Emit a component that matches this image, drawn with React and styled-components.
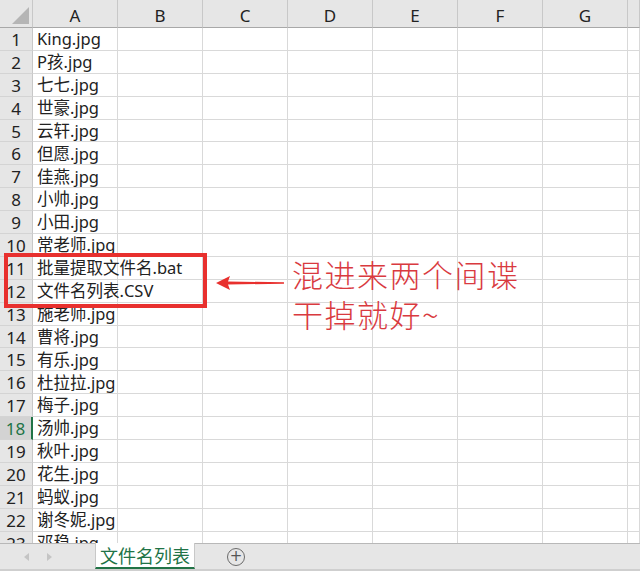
import React from "react";
import styled, { createGlobalStyle } from "styled-components";

const Global = createGlobalStyle`
  html, body { margin: 0; padding: 0; background: #fff; }
  body { width: 640px; height: 571px; overflow: hidden; font-family: "Noto Sans", "Noto Sans CJK SC", sans-serif; }
`;

const Page = styled.div`
  position: relative;
  width: 640px;
  height: 571px;
  display: flex;
  flex-direction: column;
  overflow: hidden;
`;

const Sheet = styled.div`
  height: 543px;
  overflow: hidden;
  display: grid;
  grid-template-columns: 33px repeat(7, 85px) 1fr;
  grid-auto-rows: 22.9px;
  grid-template-rows: 28px;
  align-content: start;
`;

const Corner = styled.div`
  background: #e6e6e6;
  border-right: 1px solid #c8c8c8;
  border-bottom: 1px solid #a8a8a8;
  position: relative;
  box-sizing: border-box;
  &::after {
    content: "";
    position: absolute;
    right: 3px;
    bottom: 3px;
    width: 0;
    height: 0;
    border-left: 17px solid transparent;
    border-bottom: 17px solid #b5b5b5;
  }
`;

const ColHead = styled.div`
  background: #e6e6e6;
  border-right: 1px solid #c8c8c8;
  border-bottom: 1px solid #a8a8a8;
  box-sizing: border-box;
  display: flex;
  align-items: center;
  justify-content: center;
  font-size: 17px;
  color: #222;
  padding-top: 3px;
`;

const RowHead = styled.div`
  background: ${(p) => (p.$active ? "#d3d3d3" : "#e6e6e6")};
  color: ${(p) => (p.$active ? "#217346" : "#222")};
  border-right: ${(p) => (p.$active ? "2px solid #217346" : "1px solid #c8c8c8")};
  border-bottom: 1px solid #d4d4d4;
  box-sizing: border-box;
  display: flex;
  align-items: center;
  justify-content: center;
  padding-top: 1px;
  font-size: 17px;
  line-height: 1;
`;

const Cell = styled.div`
  border-right: 1px solid #d9d9d9;
  border-bottom: 1px solid #d9d9d9;
  box-sizing: border-box;
  display: flex;
  align-items: center;
  padding-left: 4px;
  padding-top: 1px;
  font-size: 16.5px;
  color: #222;
  white-space: nowrap;
  overflow: visible;
  font-family: "Noto Sans", "Noto Sans CJK SC", sans-serif;
  line-height: 1;
  position: relative;
  z-index: ${(p) => (p.$text ? 1 : 0)};
  background: ${(p) => (p.$text ? "transparent" : "#fff")};
`;

const TabBar = styled.div`
  height: 28px;
  background: #e6e6e6;
  border-top: 1px solid #b8b8b8;
  border-bottom: 2px solid #cfcfcf;
  box-sizing: border-box;
  display: flex;
  align-items: stretch;
`;

const NavArrows = styled.div`
  width: 95px;
  display: flex;
  align-items: center;
  gap: 18px;
  padding-left: 24px;
  box-sizing: border-box;
`;

const Tri = styled.span`
  width: 0;
  height: 0;
  border-top: 4px solid transparent;
  border-bottom: 4px solid transparent;
  ${(p) => (p.$left ? "border-right: 5px solid #c4c4c4;" : "border-left: 5px solid #c4c4c4;")}
`;

const Tab = styled.div`
  width: 100px;
  margin-top: -1px;
  background: #fff;
  border-left: 1px solid #c8c8c8;
  border-right: 1px solid #c8c8c8;
  border-bottom: 2px solid #217346;
  box-sizing: border-box;
  display: flex;
  align-items: center;
  justify-content: center;
  font-size: 18px;
  color: #217346;
  font-family: "Noto Sans CJK SC", sans-serif;
`;

const AddBtn = styled.div`
  margin-left: 32px;
  align-self: center;
  width: 18px;
  height: 18px;
  border: 1.5px solid #6a6a6a;
  border-radius: 50%;
  box-sizing: border-box;
  display: flex;
  align-items: center;
  justify-content: center;
  color: #555;
  font-size: 15px;
  line-height: 1;
  font-family: "DejaVu Sans", sans-serif;
`;

const RedBox = styled.div`
  position: absolute;
  left: 4px;
  top: 253px;
  width: 203px;
  height: 55px;
  border: 4px solid #e8302e;
  box-sizing: border-box;
  z-index: 3;
`;

const Arrow = styled.svg`
  position: absolute;
  left: 214px;
  top: 274px;
  z-index: 3;
`;

const Note = styled.div`
  position: absolute;
  left: 292px;
  top: 254px;
  z-index: 3;
  color: #d93a3f;
  font-size: 31px;
  line-height: 40px;
  font-weight: 300;
  font-family: "Noto Sans CJK SC", sans-serif;
  letter-spacing: 1.5px;
`;

const files = [
  "King.jpg", "P孩.jpg", "七七.jpg", "世豪.jpg", "云轩.jpg", "但愿.jpg", "佳燕.jpg",
  "小帅.jpg", "小田.jpg", "常老师.jpg", "批量提取文件名.bat", "文件名列表.CSV",
  "施老师.jpg", "曹将.jpg", "有乐.jpg", "杜拉拉.jpg", "梅子.jpg", "汤帅.jpg",
  "秋叶.jpg", "花生.jpg", "蚂蚁.jpg", "谢冬妮.jpg", "邓稳.jpg",
];

const cols = ["A", "B", "C", "D", "E", "F", "G", ""];

export default function App() {
  return (
    <Page>
      <Global />
      <Sheet>
        <Corner />
        {cols.map((c, i) => (
          <ColHead key={i}>{c}</ColHead>
        ))}
        {files.map((f, r) => (
          <React.Fragment key={r}>
            <RowHead $active={r === 17}>{r + 1}</RowHead>
            <Cell $text>{f}</Cell>
            {cols.slice(1).map((_, ci) => (
              <Cell key={ci} />
            ))}
          </React.Fragment>
        ))}
      </Sheet>
      <TabBar>
        <NavArrows>
          <Tri $left />
          <Tri />
        </NavArrows>
        <Tab>文件名列表</Tab>
        <AddBtn>+</AddBtn>
      </TabBar>
      <RedBox />
      <Arrow width="72" height="18" viewBox="0 0 72 18">
        <path d="M2 9 L16 2 L14 7.5 L70 8.3 L70 9.7 L14 10.5 L16 16 Z" fill="#e8302e" />
      </Arrow>
      <Note>
        混进来两个间谍
        <br />
        干掉就好~
      </Note>
    </Page>
  );
}
